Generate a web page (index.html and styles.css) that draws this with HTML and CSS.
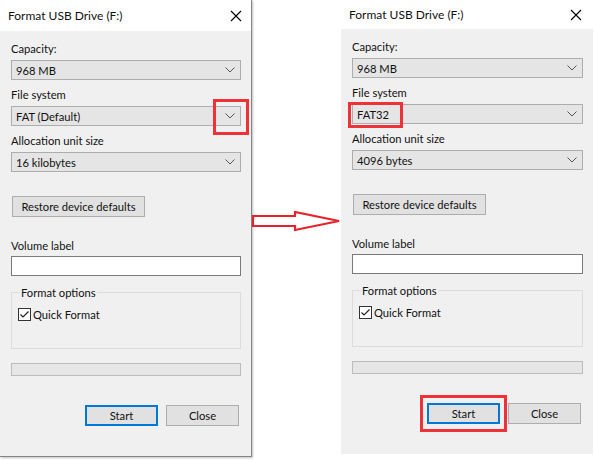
FILE: index.html
```html
<!DOCTYPE html>
<html>
<head>
<meta charset="utf-8">
<link rel="stylesheet" href="styles.css">
</head>
<body>
<div class="scene">
  <div class="dialog dialog-left">
    <div class="titlebar">
      <span class="title">Format USB Drive (F:)</span>
      <svg class="close-x" width="12" height="12" viewBox="0 0 12 12"><path d="M1 1 L11 11 M11 1 L1 11" stroke="#000" stroke-width="1.1" fill="none"/></svg>
    </div>
    <div class="body">
      <div class="label">Capacity:</div>
      <div class="combo"><span>968 MB</span><svg class="chev" width="10" height="6" viewBox="0 0 10 6"><path d="M0.5 0.5 L5 5 L9.5 0.5" stroke="#555" fill="none"/></svg></div>
      <div class="label sp">File system</div>
      <div class="combo"><span>FAT (Default)</span><svg class="chev" width="10" height="6" viewBox="0 0 10 6"><path d="M0.5 0.5 L5 5 L9.5 0.5" stroke="#555" fill="none"/></svg><div class="mark mark-chev"></div></div>
      <div class="label sp">Allocation unit size</div>
      <div class="combo"><span>16 kilobytes</span><svg class="chev" width="10" height="6" viewBox="0 0 10 6"><path d="M0.5 0.5 L5 5 L9.5 0.5" stroke="#555" fill="none"/></svg></div>
      <button class="btn restore">Restore device defaults</button>
      <div class="label vol">Volume label</div>
      <div class="input"></div>
      <fieldset class="group">
        <legend>Format options</legend>
        <div class="check-row">
          <svg class="checkbox" width="13" height="13" viewBox="0 0 13 13"><rect x="0.5" y="0.5" width="12" height="12" fill="#fff" stroke="#333"/><path d="M2.5 6.5 L5 9 L10.5 3.5" stroke="#222" stroke-width="1.2" fill="none"/></svg>
          <span>Quick Format</span>
        </div>
      </fieldset>
      <div class="progress"></div>
      <div class="actions">
        <div class="btn-wrap"><button class="btn primary">Start</button></div>
        <button class="btn">Close</button>
      </div>
    </div>
  </div>

  <div class="arrow-col">
    <svg class="arrow" width="89" height="24" viewBox="0 0 89 24"><path d="M1 5 L43 5 L43 1 L87 10 L43 19 L43 15 L1 15 Z" fill="#fff" stroke="#e8222a" stroke-width="2.2" stroke-linejoin="miter"/></svg>
  </div>

  <div class="dialog dialog-right">
    <div class="titlebar">
      <span class="title">Format USB Drive (F:)</span>
      <svg class="close-x" width="12" height="12" viewBox="0 0 12 12"><path d="M1 1 L11 11 M11 1 L1 11" stroke="#000" stroke-width="1.1" fill="none"/></svg>
    </div>
    <div class="body">
      <div class="label">Capacity:</div>
      <div class="combo"><span>968 MB</span><svg class="chev" width="10" height="6" viewBox="0 0 10 6"><path d="M0.5 0.5 L5 5 L9.5 0.5" stroke="#555" fill="none"/></svg></div>
      <div class="label sp">File system</div>
      <div class="combo"><span>FAT32</span><svg class="chev" width="10" height="6" viewBox="0 0 10 6"><path d="M0.5 0.5 L5 5 L9.5 0.5" stroke="#555" fill="none"/></svg><div class="mark mark-fat"></div></div>
      <div class="label sp">Allocation unit size</div>
      <div class="combo"><span>4096 bytes</span><svg class="chev" width="10" height="6" viewBox="0 0 10 6"><path d="M0.5 0.5 L5 5 L9.5 0.5" stroke="#555" fill="none"/></svg></div>
      <button class="btn restore">Restore device defaults</button>
      <div class="label vol">Volume label</div>
      <div class="input"></div>
      <fieldset class="group">
        <legend>Format options</legend>
        <div class="check-row">
          <svg class="checkbox" width="13" height="13" viewBox="0 0 13 13"><rect x="0.5" y="0.5" width="12" height="12" fill="#fff" stroke="#333"/><path d="M2.5 6.5 L5 9 L10.5 3.5" stroke="#222" stroke-width="1.2" fill="none"/></svg>
          <span>Quick Format</span>
        </div>
      </fieldset>
      <div class="progress"></div>
      <div class="actions">
        <div class="btn-wrap"><button class="btn primary">Start</button><div class="mark mark-start"></div></div>
        <button class="btn">Close</button>
      </div>
    </div>
  </div>
</div>
</body>
</html>
```

FILE: styles.css
```css
* { box-sizing: border-box; }
html, body { margin: 0; padding: 0; background: #fff; }
body {
  width: 594px;
  height: 460px;
  overflow: hidden;
  font-family: "Segoe UI", Lato, "Liberation Sans", sans-serif;
  font-size: 11.2px;
  color: #111;
}
.scene {
  display: flex;
  align-items: flex-start;
}
.dialog {
  display: flex;
  flex-direction: column;
  flex: none;
}
.dialog-left {
  width: 252px;
  border-right: 1px solid #858585;
  border-bottom: 1px solid #858585;
  box-shadow: 1px 1px 2px rgba(0,0,0,0.25);
}
.dialog-right {
  width: 252px;
}
.titlebar {
  background: #fff;
  display: flex;
  align-items: center;
  justify-content: space-between;
  padding: 0 9px 0 8px;
  height: 31px;
}
.dialog-right .titlebar { height: 29px; padding-right: 11px; }
.title { font-size: 12px; line-height: 15px; }
.close-x { display: block; }
.body {
  background: #f0f0f0;
  padding: 10px 10px 30px 11px;
  display: flex;
  flex-direction: column;
}
.label { line-height: 15px; height: 15px; }
.label.sp { margin-top: 7px; }
.combo {
  position: relative;
  margin-top: 4px;
  height: 20px;
  background: #e5e5e5;
  border: 1px solid #adadad;
  display: flex;
  align-items: center;
  justify-content: space-between;
  padding: 0 5px 0 4px;
  line-height: 15px;
}
.chev { display: block; }
.btn {
  font: inherit;
  color: #111;
  background: #e1e1e1;
  border: 1px solid #adadad;
  height: 21px;
  padding: 0;
  line-height: 17px;
  margin: 0;
}
.restore {
  align-self: flex-start;
  margin: 24px 0 0 1px;
  width: 133px;
}
.label.vol { margin-top: 21px; }
.input {
  margin-top: 3px;
  height: 20px;
  background: #fff;
  border: 1px solid #7a7a7a;
}
.group {
  margin: 9px 0 0 0;
  border: 1px solid #dcdcdc;
  padding: 0 6px 26px 6px;
  min-width: 0;
}
.group legend {
  padding: 0 1px;
  margin-left: 2px;
  line-height: 15px;
}
.check-row {
  margin-top: 7px;
  display: flex;
  align-items: center;
  gap: 2px;
  line-height: 15px;
  margin-left: 0;
}
.checkbox { display: block; flex: none; }
.progress {
  margin-top: 14px;
  height: 13px;
  background: #e6e6e6;
  border: 1px solid #bcbcbc;
}
.actions {
  margin-top: 29px;
  display: flex;
  justify-content: flex-end;
  gap: 8px;
  padding-right: 2px;
}
.actions .btn { width: 73px; }
.btn-wrap { position: relative; display: flex; }
.btn.primary { border: 2px solid #0078d7; }
.arrow-col {
  width: 89px;
  flex: none;
  padding-top: 211px;
}
.arrow { display: block; }
.mark {
  position: absolute;
  border: 3px solid #ee3238;
}
.mark-chev { left: 201px; top: -8px; width: 36px; height: 36px; }
.mark-fat { left: -5px; top: -3px; width: 55px; height: 26px; }
.mark-start { left: -7px; top: -8px; width: 87px; height: 37px; }
```
